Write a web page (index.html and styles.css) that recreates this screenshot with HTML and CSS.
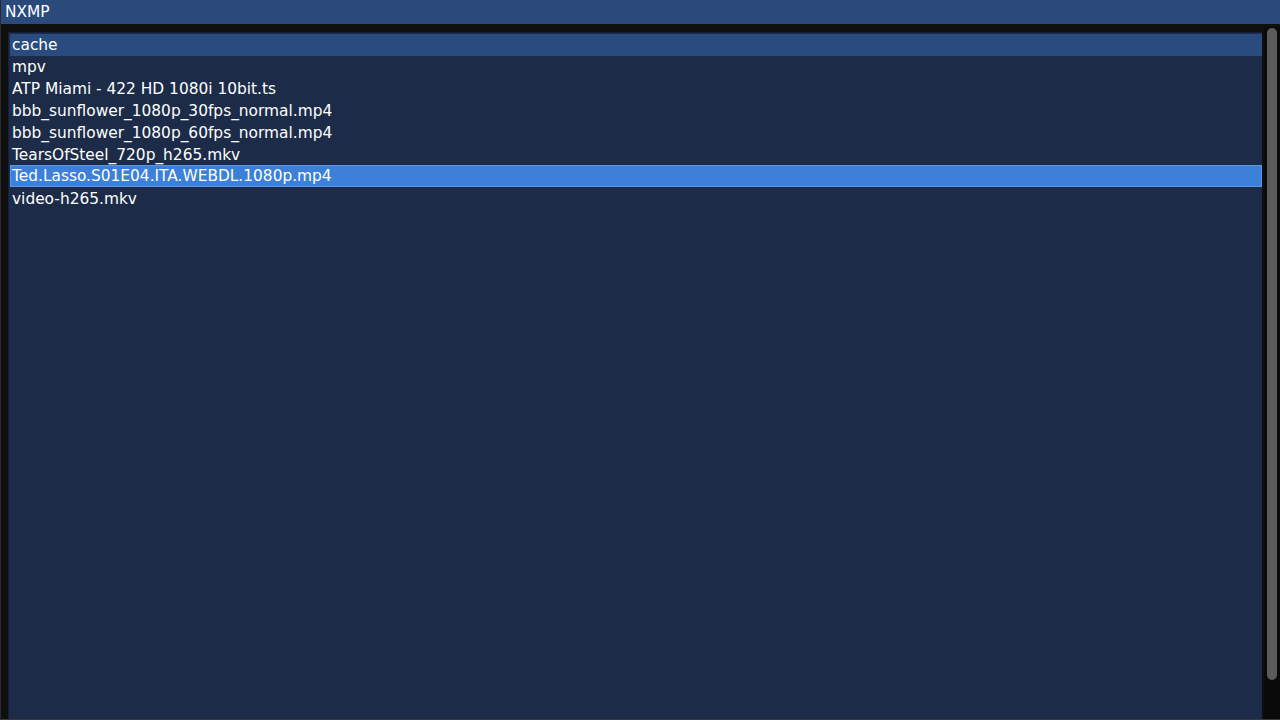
FILE: index.html
```html
<!DOCTYPE html>
<html>
<head>
<meta charset="utf-8">
<title>NXMP</title>
<link rel="stylesheet" href="styles.css">
</head>
<body>
<div class="window">
  <div class="titlebar">NXMP</div>
  <div class="content">
    <div class="filelist">
      <div class="row hovered">cache</div>
      <div class="row">mpv</div>
      <div class="row">ATP Miami - 422 HD 1080i 10bit.ts</div>
      <div class="row">bbb_sunflower_1080p_30fps_normal.mp4</div>
      <div class="row">bbb_sunflower_1080p_60fps_normal.mp4</div>
      <div class="row">TearsOfSteel_720p_h265.mkv</div>
      <div class="row selected">Ted.Lasso.S01E04.ITA.WEBDL.1080p.mp4</div>
      <div class="row">video-h265.mkv</div>
    </div>
    <div class="scrollbar"><div class="grab"></div></div>
  </div>
</div>
</body>
</html>
```
FILE: styles.css
```css
html, body {
  margin: 0;
  padding: 0;
  width: 1280px;
  height: 720px;
  overflow: hidden;
  background: #0f0f0f;
  font-family: "DejaVu Sans", sans-serif;
  font-size: 15.4px;
  color: #ffffff;
}

.window {
  display: flex;
  flex-direction: column;
  height: 720px;
  box-sizing: border-box;
  border-left: 1px solid #2a2a2a;
  border-bottom: 1px solid #3a3a3a;
}

.titlebar {
  height: 24px;
  line-height: 25px;
  padding-left: 4px;
  background: #294a7a;
  flex: none;
}

.content {
  flex: 1;
  display: flex;
  padding: 8px 0 0 7px;
  min-height: 0;
}

.filelist {
  flex: 1;
  background: #1c2c48;
  padding-top: 1px;
  border-left: 1px solid #15213a;
  border-top: 1px solid #15213a;
  margin-right: 2px;
}

.row {
  height: 22px;
  line-height: 23px;
  padding-left: 2px;
  margin-left: 1px;
  white-space: nowrap;
  box-sizing: border-box;
}

.row.hovered {
  background: #2a4b7e;
}

.row.selected {
  background: #3c80d9;
  border: 1px solid #5a97e6;
  padding-left: 1px;
  line-height: 21px;
  margin-top: -1px;
  margin-bottom: 1px;
}

.scrollbar {
  width: 16px;
  flex: none;
  background: #0a0a0a;
  margin-top: -5px;
}

.grab {
  width: 10px;
  height: 652px;
  margin-top: 1px;
  margin-left: 3px;
  background: #5b5b5b;
  border-radius: 5px;
}
```
